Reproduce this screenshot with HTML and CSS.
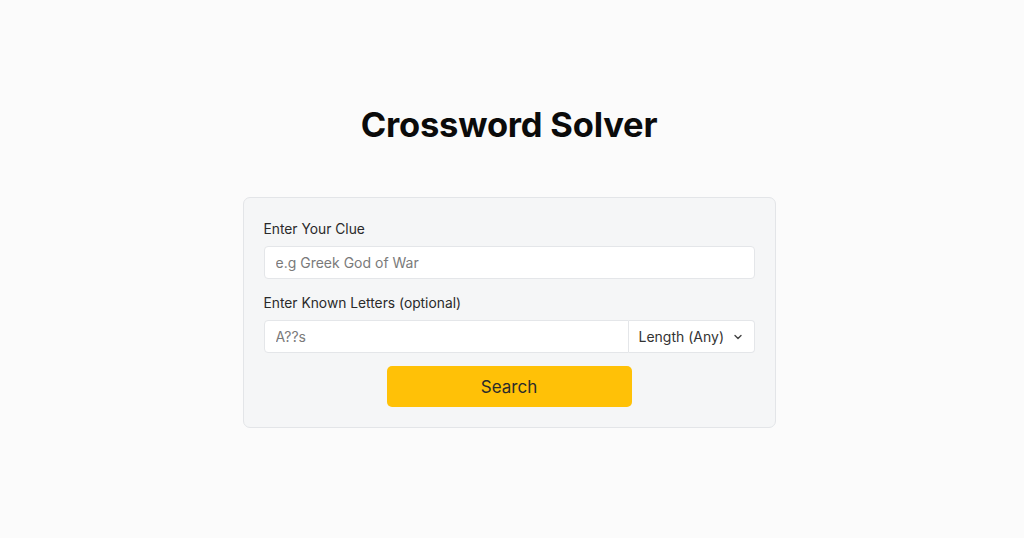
FILE: index.html
```html
<!DOCTYPE html>
<html lang="en">
<head>
<meta charset="utf-8">
<title>Crossword Solver</title>
<link rel="stylesheet" href="styles.css">
</head>
<body>
<main class="page">
  <h1 class="title">Crossword Solver</h1>
  <form class="card">
    <label class="label" for="clue">Enter Your Clue</label>
    <input class="field" id="clue" type="text" placeholder="e.g Greek God of War">
    <label class="label label-second" for="letters">Enter Known Letters (optional)</label>
    <div class="group">
      <input class="field field-grow" id="letters" type="text" placeholder="A??s">
      <div class="select">
        <span>Length (Any)</span>
        <svg class="chev" width="10" height="10" viewBox="0 0 10 10"><path d="M2 3.5 L5 6.5 L8 3.5" fill="none" stroke="#444" stroke-width="1.4" stroke-linecap="round" stroke-linejoin="round"/></svg>
      </div>
    </div>
    <div class="actions">
      <button class="btn" type="button">Search</button>
    </div>
  </form>
</main>
</body>
</html>
```

FILE: styles.css
```css
* { box-sizing: border-box; }
html, body { margin: 0; height: 100%; }
body {
  background: #fbfbfb;
  font-family: Inter, "Noto Sans", sans-serif;
  color: #212529;
}
.page {
  display: flex;
  flex-direction: column;
  align-items: center;
  padding-top: 103px;
  padding-right: 6px;
}
.title {
  margin: 0 0 50px;
  font-size: 34.5px;
  font-weight: 700;
  line-height: 44px;
  color: #0b0b0b;
  letter-spacing: -0.2px;
}
.card {
  width: 533px;
  background: #f5f6f7;
  border: 1px solid #e3e5e8;
  border-radius: 7px;
  padding: 22px 20px 20px;
  display: flex;
  flex-direction: column;
}
.label {
  font-size: 13.8px;
  line-height: 18px;
  color: #2a2a2a;
  margin-bottom: 8px;
}
.label-second { margin-top: 15px; }
.field {
  height: 33px;
  border: 1px solid #e4e6e9;
  border-radius: 4px;
  background: #fff;
  padding: 0 11px;
  font-family: inherit;
  font-size: 14px;
  color: #333;
  outline: none;
}
.field::placeholder { color: #7a7a7a; }
.group { display: flex; }
.field-grow {
  flex: 1;
  border-radius: 4px 0 0 4px;
}
.select {
  width: 126px;
  height: 33px;
  border: 1px solid #e4e6e9;
  border-left: 0;
  border-radius: 0 4px 4px 0;
  background: #fff;
  display: flex;
  align-items: center;
  justify-content: space-between;
  padding: 0 11px 0 10px;
  font-size: 14px;
  color: #333;
}
.chev { display: block; }
.actions {
  display: flex;
  justify-content: center;
  margin-top: 13px;
}
.btn {
  width: 245px;
  height: 41px;
  border: 0;
  border-radius: 5px;
  background: #ffc107;
  font-family: inherit;
  font-size: 17px;
  color: #2b2b2b;
}
```
